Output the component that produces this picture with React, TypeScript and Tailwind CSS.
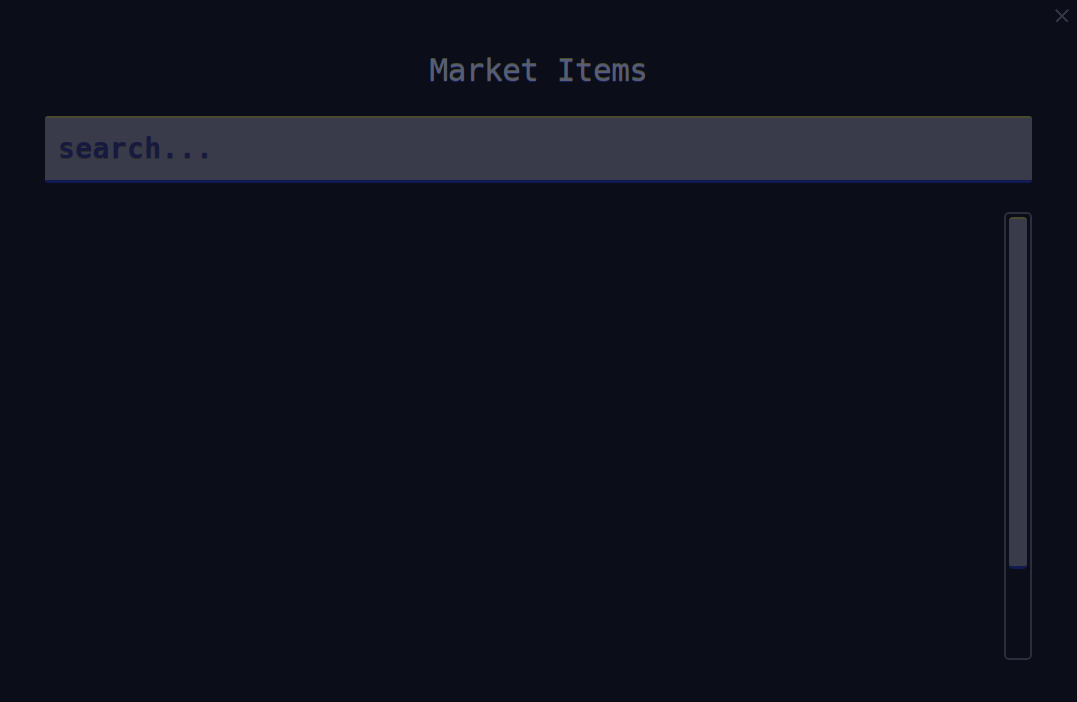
import React from 'react';

const pixelFont = { fontFamily: '"DejaVu Sans Mono", "Liberation Mono", monospace' };

const App: React.FC = () => {
    return (
        <div className="w-[1077px] h-[702px] bg-[#0b0e18] relative overflow-hidden" style={pixelFont}>
            {/* close */}
            <button className="absolute right-[6px] top-[7px] w-[18px] h-[18px] flex items-center justify-center">
                <svg width="14" height="14" viewBox="0 0 14 14" shapeRendering="crispEdges">
                    <path d="M1 1 L13 13 M13 1 L1 13" stroke="#2f3344" strokeWidth="2" />
                </svg>
            </button>

            <div className="flex flex-col px-[45px] pt-[50px]">
                <h1 className="text-center text-[31px] leading-[40px] text-[#565d74] tracking-[-0.5px] [text-shadow:0_-1px_0_#4b4f2e,0_1px_0_#1a1d5a]">
                    Market Items
                </h1>

                <div className="mt-[26px] h-[67px] bg-[#393a4a] rounded-[3px] border-t-2 border-t-[#4a4a30] border-b-[3px] border-b-[#121a52] flex items-center px-[13px]">
                    <span className="text-[28px] font-bold text-[#161940] tracking-[0.4px] [text-shadow:0_1px_0_#2e2e28]">search...</span>
                </div>

                <div className="mt-[29px] flex">
                    <div className="flex-1 h-[448px]" />
                    <div className="w-[28px] h-[448px] rounded-[5px] border-2 border-[#2c2e3e] p-[3px] flex flex-col">
                        <div className="h-[352px] bg-[#393a4a] rounded-[4px] border-t-2 border-t-[#4a4a30] border-b-[3px] border-b-[#121a52]" />
                    </div>
                </div>
            </div>
        </div>
    );
};

export default App;
